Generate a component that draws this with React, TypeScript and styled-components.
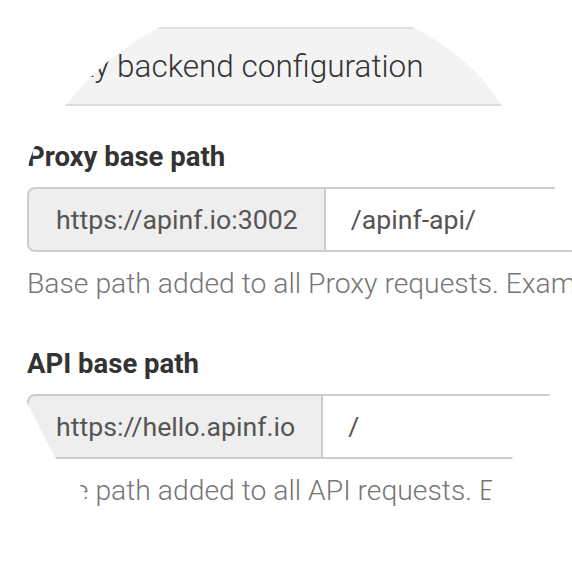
import React from "react";
import styled, { createGlobalStyle } from "styled-components";

const GlobalStyle = createGlobalStyle`
  html, body {
    margin: 0;
    padding: 0;
    background: #ffffff;
    font-family: Roboto, "Liberation Sans", Arial, sans-serif;
  }
`;

// the screenshot is seen through a magnifier, so the page is cut by its rim
const lensPath = `path('M 160 27 L 412 27 Q 470 55 503 107 L 554 186 Q 566 215 572 252 L 600 300 L 600 370 L 551 393 Q 530 430 510 462 L 491 482 L 490 515 L 86 515 L 84 490 L 58 462 Q 40 430 28 404 L 20 395 L 20 180 L 27 168 L 34 148 L 64 107 Q 105 55 160 27 Z')`;

const Lens = styled.div`
  width: 572px;
  height: 572px;
  overflow: hidden;
  background: #ffffff;
  clip-path: ${lensPath};
  padding-top: 27px;
  box-sizing: border-box;
`;

const HeaderBar = styled.div`
  height: 79px;
  box-sizing: border-box;
  background: #f3f3f3;
  border-top: 2px solid #dedede;
  border-bottom: 2px solid #dcdcdc;
  display: flex;
  align-items: center;
  padding-left: 32px;
`;

const HeaderTitle = styled.h3`
  margin: 0;
  font-size: 31.5px;
  font-weight: 300;
  color: #333333;
  white-space: nowrap;
`;

const Form = styled.div`
  padding-left: 27px;
`;

const Field = styled.div<{ $first?: boolean }>`
  margin-top: ${({ $first }) => ($first ? "35px" : "47px")};
`;

const Label = styled.label`
  display: block;
  font-size: 27.5px;
  line-height: 32px;
  font-weight: 700;
  color: #333333;
  white-space: nowrap;
`;

const InputGroup = styled.div`
  display: flex;
  margin-top: 14px;
  height: 65px;
  width: 620px;
`;

const Addon = styled.span`
  display: flex;
  align-items: center;
  box-sizing: border-box;
  padding: 0 26px 0 27px;
  background: #eeeeee;
  border: 2px solid #cccccc;
  border-radius: 8px 0 0 8px;
  font-size: 26.7px;
  font-weight: 400;
  color: #555555;
  white-space: nowrap;
`;

const TextInput = styled.input`
  flex: 1;
  min-width: 0;
  box-sizing: border-box;
  margin: 0;
  padding: 0 0 0 25px;
  border: 2px solid #cccccc;
  border-left: none;
  background: #ffffff;
  outline: none;
  font-family: Roboto, "Liberation Sans", Arial, sans-serif;
  font-size: 26.7px;
  font-weight: 400;
  color: #555555;
`;

const Help = styled.p`
  margin: 15px 0 0;
  font-size: 28.3px;
  line-height: 34px;
  font-weight: 300;
  color: #767676;
  white-space: nowrap;
`;

type PathField = {
  label: string;
  host: string;
  path: string;
  help: string;
};

const fields: PathField[] = [
  {
    label: "Proxy base path",
    host: "https://apinf.io:3002",
    path: "/apinf-api/",
    help: "Base path added to all Proxy requests. Example: /apinf-api/",
  },
  {
    label: "API base path",
    host: "https://hello.apinf.io",
    path: "/",
    help: "Base path added to all API requests. Example: /",
  },
];

export default function App() {
  return (
    <>
      <GlobalStyle />
      <Lens>
        <HeaderBar>
          <HeaderTitle>Proxy backend configuration</HeaderTitle>
        </HeaderBar>
        <Form>
          {fields.map((f, i) => (
            <Field key={f.label} $first={i === 0}>
              <Label>{f.label}</Label>
              <InputGroup>
                <Addon>{f.host}</Addon>
                <TextInput readOnly value={f.path} />
              </InputGroup>
              <Help>{f.help}</Help>
            </Field>
          ))}
        </Form>
      </Lens>
    </>
  );
}
